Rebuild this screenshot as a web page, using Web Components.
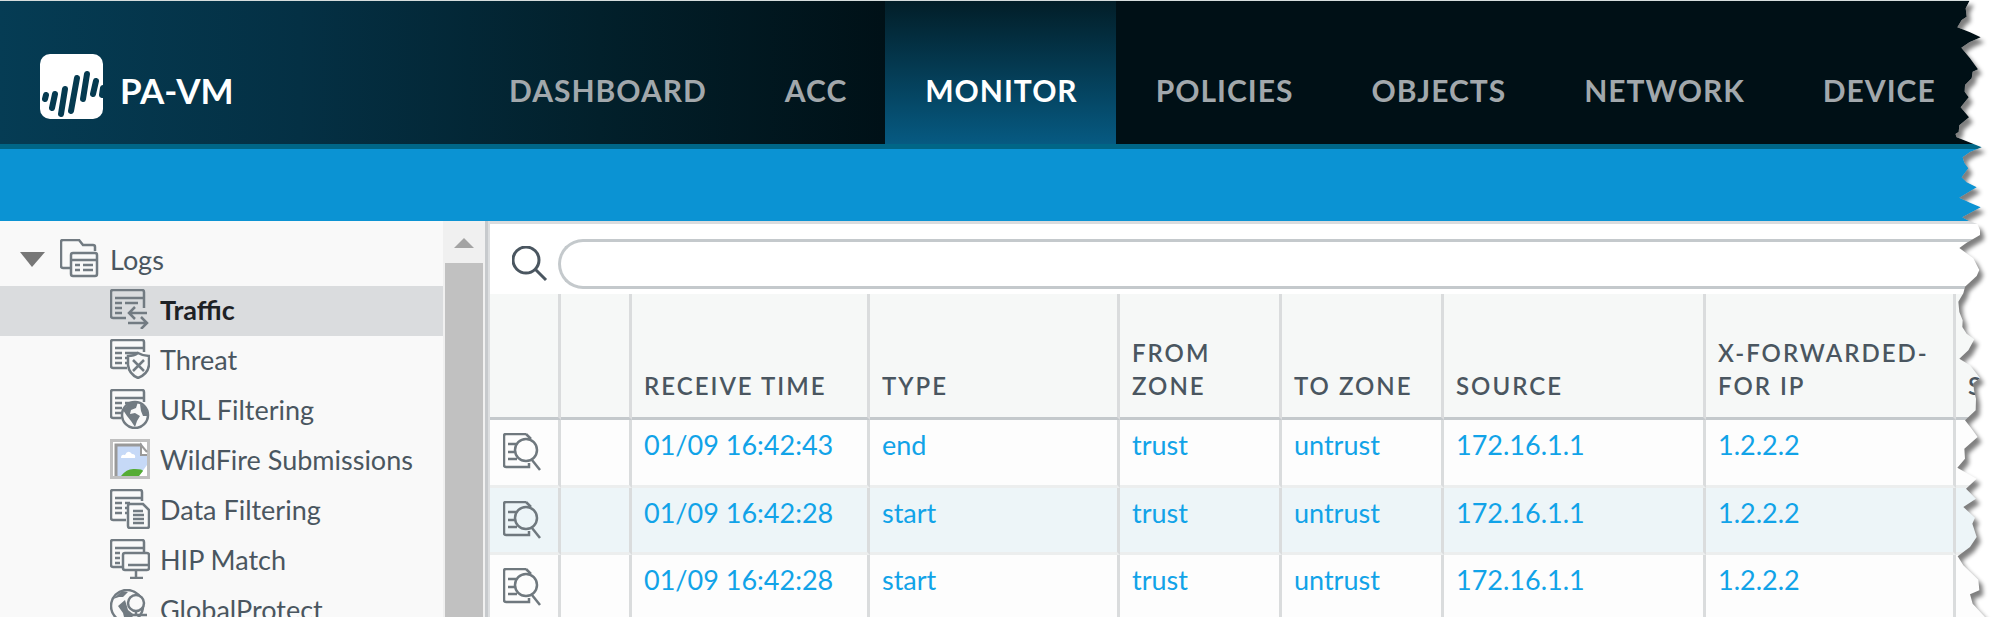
<!DOCTYPE html>
<html lang="en">
<head>
<meta charset="utf-8">
<title>PA-VM</title>
<style>
  html, body { height: 100%; }
  body {
    margin: 0;
    overflow: hidden;
    background: #fff;
    color: #4a5660;
    font-family: Lato, "Liberation Sans", sans-serif;
    font-size: 27px;
  }
</style>
</head>
<body>
<pan-app>
  <pan-topbar slot="top" name="PA-VM">
    <pan-tab>DASHBOARD</pan-tab>
    <pan-tab>ACC</pan-tab>
    <pan-tab active>MONITOR</pan-tab>
    <pan-tab>POLICIES</pan-tab>
    <pan-tab>OBJECTS</pan-tab>
    <pan-tab>NETWORK</pan-tab>
    <pan-tab>DEVICE</pan-tab>
  </pan-topbar>
  <pan-sidebar slot="side">
    <pan-tree-item icon="logs" root>Logs</pan-tree-item>
    <pan-tree-item icon="traffic" selected>Traffic</pan-tree-item>
    <pan-tree-item icon="threat">Threat</pan-tree-item>
    <pan-tree-item icon="url">URL Filtering</pan-tree-item>
    <pan-tree-item icon="wildfire">WildFire Submissions</pan-tree-item>
    <pan-tree-item icon="data">Data Filtering</pan-tree-item>
    <pan-tree-item icon="hip">HIP Match</pan-tree-item>
    <pan-tree-item icon="gp">GlobalProtect</pan-tree-item>
  </pan-sidebar>
  <pan-search></pan-search>
  <pan-log-table></pan-log-table>
</pan-app>

<script>
// 40x40 icons, stroked with the current colour
const FRAME = '<path d="M5 9H33M5 14H12M15 14H28M5 19H12M5 24H12"/>';
const ICONS = {
  logs: `<path d="M11 29H3Q1 29 1 27V3Q1 1 3 1H19L23 6H33Q35 6 35 8V12"/>
    <rect x="11" y="14" width="26" height="23" rx="2"/><path d="M11 21H37M15 26H20M23 26H33M15 31H20M23 31H33"/>`,
  traffic: `<path d="M34 19V3Q34 1 32 1H3Q1 1 1 3V27Q1 29 3 29H16"/>${FRAME}
    <path d="M37 24H19M25 18L19 24L25 30M18 34H37M31 28L37 34L31 40"/>`,
  threat: `<path d="M34 13V3Q34 1 32 1H3Q1 1 1 3V27Q1 29 3 29H17"/>${FRAME}<path d="M15 19H18M15 24H18"/>
    <path fill="var(--icon-bg)" d="M28 14Q24 17 18 17V26Q19 35 28 39Q38 35 39 26V17Q33 17 28 14Z"/><path d="M23 21L34 32M34 21L23 32"/>`,
  url: `<path d="M34 13V3Q34 1 32 1H3Q1 1 1 3V27Q1 29 3 29H11"/>${FRAME}
    <circle cx="25" cy="26" r="13" fill="var(--icon-bg)"/>
    <path fill="currentColor" stroke="none" d="M13 21L20 14L28 13L26 19L21 21L20 25L25 24L30 27L27 32L25 38L21 32L17 27ZM30 15L36 19L38 27L33 27L31 22Z"/>`,
  wildfire: `<rect x="1.5" y="1.5" width="37" height="37" fill="#fff" stroke="#c0c0c0" stroke-width="3"/>
    <path fill="#c6d9f7" stroke="none" d="M5 5H32L37 16V37H5Z"/>
    <path fill="#fff" stroke="none" d="M11 19Q11 15 15 16Q18 10 22 15Q26 15 25 19ZM37 26L29 37H37Z"/>
    <path fill="#55ac34" stroke="none" d="M11 37Q17 29 25 30Q33 30 33 32L29 37Z"/>
    <path stroke="#999" stroke-width="3" d="M6 37V6H32"/>
    <path fill="#fff" stroke="#999" stroke-width="2" d="M37 16H31V6L37 13"/>`,
  data: `<path d="M32 12V3Q32 1 30 1H3Q1 1 1 3V29Q1 31 3 31H16"/><path d="M5 9H31M5 14H12M15 14H20M5 19H12M15 19H18M5 24H12M15 24H18"/>
    <path fill="var(--icon-bg)" d="M20 15H33L39 21V37Q39 39 37 39H20Q18 39 18 37V17Q18 15 20 15Z"/><path d="M23 22H33M23 26H34M23 30H34M23 34H34"/>`,
  hip: `<path d="M34 13V3Q34 1 32 1H3Q1 1 1 3V26Q1 28 3 28H12"/><path d="M5 9H33M5 14H10M5 19H10M5 24H10"/>
    <rect x="13" y="14" width="26" height="17" rx="2" fill="var(--icon-bg)"/><path d="M18 26H39M26 31V38M20 39H33"/>`,
  gp: `<circle cx="17" cy="17" r="16"/>
    <path fill="currentColor" stroke="none" d="M3 10L12 2L18 3L13 8L9 8ZM8 17L15 11L18 21L23 25L19 33L15 32L13 24Z"/>
    <circle cx="26" cy="14" r="8" fill="var(--icon-bg)"/><path d="M20 30L22 26H37M26 22V27"/>`,
  detail: `<path d="M23 1H3Q1 1 1 3V32Q1 34 3 34H26V30M23 1L28 6M5 11H13M5 19H12M5 26H14"/>
    <circle cx="23" cy="17" r="11"/><path d="M29 27L37 37"/>`,
  search: `<circle cx="14" cy="14" r="13" stroke-width="3"/><path stroke-width="3" d="M23 23L34 34"/>`
};

function icon(name, size = 40) {
  return `<svg width="${size}" height="${size}" viewBox="0 0 ${size} ${size}" fill="none"
    stroke="currentColor" stroke-width="2.5" aria-hidden="true">${ICONS[name]}</svg>`;
}

// Small base: fills an open shadow root with render()
class PanElement extends HTMLElement {
  connectedCallback() {
    if (this.shadowRoot) return;
    const template = document.createElement('template');
    template.innerHTML = this.render();
    this.attachShadow({ mode: 'open' }).appendChild(template.content.cloneNode(true));
  }
}

class PanApp extends PanElement {
  render() {
    return `
      <style>
        :host { display: flex; flex-direction: column; height: 100vh; position: relative; overflow: hidden; }
        .strip { flex: none; height: 72px; background: #0b93d3; }
        .body { flex: 1; min-height: 0; display: flex; }
        main { flex: 1; min-width: 0; border-top: 3px solid #dadcde; overflow: hidden; }
      </style>
      <slot name="top"></slot>
      <div class="strip"></div>
      <div class="body">
        <slot name="side"></slot>
        <main><slot></slot></main>
      </div>
      <pan-torn-edge></pan-torn-edge>
    `;
  }
}

class PanTopbar extends PanElement {
  render() {
    return `
      <style>
        :host { display: block; flex: none; border-top: 1px solid #d6dddd; border-bottom: 5px solid #006687; }
        header {
          display: flex;
          height: 143px;
          background: linear-gradient(90deg, #053c54 0, #043044 300px, #02202b 600px, #001016 900px);
        }
        .brand { flex: none; display: flex; align-items: center; gap: 17px; width: 469px; padding: 28px 0 0 40px; box-sizing: border-box; }
        .brand b { color: #fff; font-size: 35px; line-height: 44px; padding-top: 6px; }
        nav { display: flex; }
      </style>
      <header>
        <div class="brand">
          <svg width="63" height="65" viewBox="0 0 63 65" aria-hidden="true">
            <rect width="63" height="65" rx="10" fill="#fff"/>
            <path d="M6 41L5 45M15 40L12 54M25 35L21 60M37 24L31 57M47 20L43 45M56 27L53 40M63 34L62 41"
              stroke="#053a50" stroke-width="6" stroke-linecap="round"/>
          </svg>
          <b>${this.getAttribute('name')}</b>
        </div>
        <nav><slot></slot></nav>
      </header>
    `;
  }
}

class PanTab extends PanElement {
  render() {
    return `
      <style>
        :host { display: flex; }
        a {
          display: flex;
          align-items: center;
          padding: 34px 38px 0 40px;
          color: #a2a8ac;
          font-size: 30px;
          font-weight: 700;
          letter-spacing: 1px;
          text-decoration: none;
        }
        :host([active]) a { color: #fff; background: linear-gradient(#021e28, #043950 45%, #065a82); }
      </style>
      <a href="#"><slot></slot></a>
    `;
  }
}

class PanSidebar extends PanElement {
  render() {
    return `
      <style>
        :host { display: flex; flex: none; width: 485px; background: #f9f9f9; border-right: 3px solid #c7cacd; box-shadow: 2px 0 #dcdee0; margin-right: 2px; }
        .tree { flex: 1; padding-top: 15px; overflow: hidden; }
        .scroll { width: 38px; padding: 0 2px; background: #f0f0f0; display: flex; flex-direction: column; }
        button { display: flex; justify-content: center; align-items: flex-start; height: 42px; border: 0; padding: 17px 0 0; background: none; }
        .thumb { flex: 1; background: #c1c1c1; }
      </style>
      <div class="tree"><slot></slot></div>
      <div class="scroll">
        <button aria-label="Scroll up"><svg width="20" height="10"><path d="M0 10L10 0L20 10Z" fill="#a3a3a3"/></svg></button>
        <div class="thumb"></div>
      </div>
    `;
  }
}

class PanTreeItem extends PanElement {
  render() {
    const root = this.hasAttribute('root');
    return `
      <style>
        :host { display: block; --icon-bg: #f9f9f9; }
        a {
          display: flex;
          align-items: center;
          box-sizing: border-box;
          height: 50px;
          padding: 0 0 4px 110px;
          gap: 10px;
          color: inherit;
          text-decoration: none;
          white-space: nowrap;
        }
        svg { flex: none; color: #727b82; }
        :host([root]) a { padding-left: 20px; }
        :host([root]) .arrow { margin-right: 5px; }
        :host([selected]) { background: #dadcde; color: #1d2125; font-weight: 700; --icon-bg: #dadcde; }
      </style>
      <a href="#">
        ${root ? '<svg class="arrow" width="25" height="15"><path d="M0 0H25L12 15Z" fill="#777"/></svg>' : ''}
        ${icon(this.getAttribute('icon'))}
        <slot></slot>
      </a>
    `;
  }
}

class PanSearch extends PanElement {
  render() {
    return `
      <style>
        :host { display: flex; padding: 15px 0 5px 22px; background: #fff; }
        label { padding-top: 7px; line-height: 0; width: 46px; }
        input {
          flex: 1;
          min-width: 0;
          height: 50px;
          box-sizing: border-box;
          border: 3px solid #c4c9cc;
          border-right: 0;
          border-radius: 25px 0 0 25px;
          padding: 0 20px;
          font: inherit;
          outline: 0;
        }
      </style>
      <label for="q">${icon('search', 36)}</label>
      <input id="q" type="text" aria-label="Filter">
    `;
  }
}

class PanLogTable extends PanElement {
  render() {
    const cols = [71, 71, 238, 250, 162, 162, 262, 250];
    const heads = ['', '', 'RECEIVE TIME', 'TYPE', 'FROM ZONE', 'TO ZONE', 'SOURCE', 'X-FORWARDED-FOR IP', 'S'];
    const rows = [
      ['01/09 16:42:43', 'end', 'trust', 'untrust', '172.16.1.1', '1.2.2.2'],
      ['01/09 16:42:28', 'start', 'trust', 'untrust', '172.16.1.1', '1.2.2.2'],
      ['01/09 16:42:28', 'start', 'trust', 'untrust', '172.16.1.1', '1.2.2.2']
    ];
    return `
      <style>
        :host { display: block; }
        table { width: 100%; table-layout: fixed; border-collapse: separate; border-spacing: 0; }
        th, td { box-sizing: border-box; text-align: left; border-right: 3px solid #dadcdd; }
        th:last-child, td:last-child { border-right: 0; }
        th {
          height: 126px;
          padding: 0 6px 15px 12px;
          vertical-align: bottom;
          background: #f6f8f7;
          border-bottom: 3px solid #c4c9cc;
          font-size: 24px;
          line-height: 33px;
          font-weight: 600;
          letter-spacing: 2px;
        }
        td {
          height: 67px;
          padding: 8px 0 0 12px;
          vertical-align: top;
          line-height: 34px;
          background: #fdfdfd;
          border-bottom: 3px solid #eceeee;
          white-space: nowrap;
          color: #11a3e8;
        }
        tr:first-child td { height: 68px; }
        tr:nth-child(2) td { background: #edf5f8; }
        button { display: block; border: 0; padding: 5px 0 0 1px; background: none; line-height: 0; color: #6f787e; }
      </style>
      <table>
        <colgroup>${cols.map(w => `<col style="width:${w}px">`).join('')}<col></colgroup>
        <thead><tr>${heads.map(h => `<th>${h}</th>`).join('')}</tr></thead>
        <tbody>
          ${rows.map(r => `<tr><td><button aria-label="Details">${icon('detail', 38)}</button></td><td></td>${r.map(c => `<td>${c}</td>`).join('')}<td></td></tr>`).join('')}
        </tbody>
      </table>
    `;
  }
}

// Ragged right side of the page with its drop shadow
class PanTornEdge extends PanElement {
  render() {
    const edge = `118 0 118 3 107 25 110 50 95 60 82 82 120 97 152 112 118 127 94 143 120 175 144 208 128 215 125 235 105 255
      104 275 116 292 92 322 117 352 88 376 86 396 76 402 80 412 125 430 155 442 120 456 98 472 103 488 115 505 95 532 110 547
      140 562 88 593 120 608 152 622 97 652 118 664 142 672 150 690 150 705 110 728 88 744 130 775 148 810 140 828 105 860
      100 880 85 905 88 936 98 961 97 981 110 1001 133 1018 115 1051 88 1076 120 1096 150 1134 130 1150 132 1171 138 1196
      137 1231 105 1261 125 1286 143 1311 103 1346 105 1376 82 1403 140 1436 108 1466 138 1496 100 1521 135 1553 127 1571
      140 1611 120 1641 83 1669 100 1696 145 1739 148 1771 120 1783 128 1811 165 1851`;
    return `
      <style>
        :host { position: absolute; top: 0; right: 0; line-height: 0; pointer-events: none; }
      </style>
      <svg width="62" height="617" viewBox="0 0 186 1851" aria-hidden="true">
        <defs>
          <clipPath id="out"><polygon points="${edge} 186 1851 186 0"/></clipPath>
          <filter id="soft" x="-20%" width="140%"><feGaussianBlur stdDeviation="6"/></filter>
        </defs>
        <g clip-path="url(#out)">
          <rect width="186" height="1851" fill="#fff"/>
          <polygon points="${edge} -40 1851 -40 0" transform="translate(12 15)" fill="#000" opacity=".5" filter="url(#soft)"/>
        </g>
      </svg>
    `;
  }
}

customElements.define('pan-torn-edge', PanTornEdge);
customElements.define('pan-app', PanApp);
customElements.define('pan-topbar', PanTopbar);
customElements.define('pan-tab', PanTab);
customElements.define('pan-sidebar', PanSidebar);
customElements.define('pan-tree-item', PanTreeItem);
customElements.define('pan-search', PanSearch);
customElements.define('pan-log-table', PanLogTable);
</script>
</body>
</html>
